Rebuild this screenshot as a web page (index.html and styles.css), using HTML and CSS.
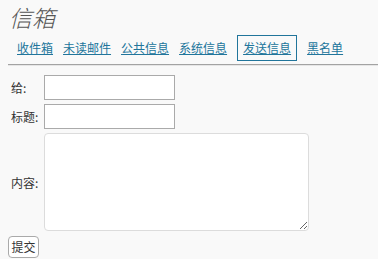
FILE: index.html
```html
<!DOCTYPE html>
<html lang="zh">
<head>
<meta charset="utf-8">
<title>信箱</title>
<link rel="stylesheet" href="styles.css">
</head>
<body>
<div class="wrap">
  <h2 class="title">信箱</h2>
  <ul class="tabs">
    <li><a href="#">收件箱</a></li>
    <li><a href="#">未读邮件</a></li>
    <li><a href="#">公共信息</a></li>
    <li><a href="#">系统信息</a></li>
    <li><a href="#" class="current">发送信息</a></li>
    <li><a href="#">黑名单</a></li>
  </ul>
  <hr class="rule">
  <form class="send">
    <table class="fields">
      <tr>
        <td class="label">给:</td>
        <td><input type="text" class="field"></td>
      </tr>
      <tr>
        <td class="label">标题:</td>
        <td><input type="text" class="field"></td>
      </tr>
      <tr>
        <td class="label">内容:</td>
        <td><textarea class="content"></textarea></td>
      </tr>
    </table>
    <button type="button" class="submit">提交</button>
  </form>
</div>
</body>
</html>
```

FILE: styles.css
```css
html, body {
  margin: 0;
  padding: 0;
  background: #f9f9f9;
}
body {
  font-family: "Noto Sans CJK SC", "Noto Sans", sans-serif;
  font-size: 12px;
  color: #333;
}
.wrap {
  padding: 3px 0 0 8px;
}
.title {
  margin: 0;
  padding-left: 1px;
  font-size: 23px;
  line-height: 29px;
  font-weight: 300;
  font-style: italic;
  color: #555;
}
.tabs {
  list-style: none;
  margin: 3px 0 0 0;
  padding: 0 0 0 9px;
  display: flex;
  gap: 10px;
}
.tabs a {
  display: block;
  padding: 5px 0;
  line-height: 16px;
  color: #21759b;
  text-decoration: underline;
}
.tabs a.current {
  padding: 4px 5px;
  border: 1px solid #21759b;
}
.rule {
  margin: 3px 0 0 0;
  height: 0;
  border: 0;
  border-top: 1px solid #a3a3a3;
  border-bottom: 1px solid #e6e6e6;
}
.fields {
  margin-top: 6px;
  border-spacing: 2px;
}
.fields td {
  padding: 1px;
  vertical-align: middle;
}
.label {
  width: 29px;
  white-space: nowrap;
  color: #333;
}
.field {
  display: block;
  box-sizing: border-box;
  width: 131px;
  height: 25px;
  margin: 0;
  border: 1px solid #aaa;
  background: #fff;
}
.content {
  display: block;
  box-sizing: border-box;
  width: 265px;
  height: 98px;
  margin: 0;
  border: 1px solid #dcdcdc;
  border-radius: 4px;
  background: #fff;
}
.submit {
  display: block;
  margin: 2px 0 0 0;
  box-sizing: border-box;
  width: 31px;
  height: 22px;
  padding: 0;
  font-family: "Noto Sans CJK SC", sans-serif;
  font-size: 12px;
  line-height: 18px;
  color: #333;
  background: #fff;
  border: 1px solid #aaa;
  border-radius: 4px;
}
```
